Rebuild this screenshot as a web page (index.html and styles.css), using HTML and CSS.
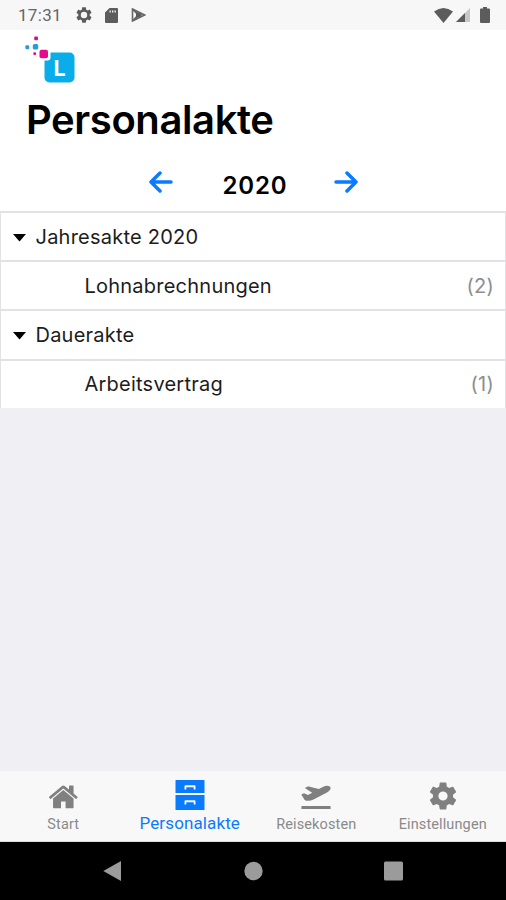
FILE: index.html
```html
<!DOCTYPE html>
<html lang="de">
<head>
<meta charset="utf-8">
<title>Personalakte</title>
<link rel="stylesheet" href="styles.css">
</head>
<body>
<div class="status">
  <span class="clock">17:31</span>
  <svg class="s-gear" viewBox="2 2 20 20"><path fill-rule="evenodd" d="M19.14 12.94c.04-.3.06-.61.06-.94 0-.32-.02-.64-.07-.94l2.03-1.58c.18-.14.23-.41.12-.61l-1.92-3.32c-.12-.22-.37-.29-.59-.22l-2.39.96c-.5-.38-1.03-.7-1.62-.94l-.36-2.54c-.04-.24-.24-.41-.48-.41h-3.84c-.24 0-.43.17-.47.41l-.36 2.54c-.59.24-1.13.57-1.62.94l-2.39-.96c-.22-.08-.47 0-.59.22L2.74 8.87c-.12.21-.08.47.12.61l2.03 1.58c-.05.3-.09.63-.09.94s.02.64.07.94l-2.03 1.58c-.18.14-.23.41-.12.61l1.92 3.32c.12.22.37.29.59.22l2.39-.96c.5.38 1.03.7 1.62.94l.36 2.54c.05.24.24.41.48.41h3.84c.24 0 .44-.17.47-.41l.36-2.54c.59-.24 1.13-.56 1.62-.94l2.39.96c.22.08.47 0 .59-.22l1.92-3.32c.12-.22.07-.47-.12-.61l-2.01-1.58zM12 16a4 4 0 1 1 0-8 4 4 0 0 1 0 8z"/></svg>
  <svg class="s-card" viewBox="0 0 13 15"><path fill-rule="evenodd" d="M4.500 0H12a1 1 0 0 1 1 1v13a1 1 0 0 1-1 1H1a1 1 0 0 1-1-1V4.500zM4.500 2.500v2h1.300v-2zM7 2.500v2h1.300v-2zM9.500 2.500v2h1.300v-2z"/></svg>
  <svg class="s-play" viewBox="0 0 15 14"><path d="M1.500 1l12 6-12 6zM1.500 1l7.500 8M1.500 13L9 5" fill="none" stroke="#666" stroke-width="1.600"/><path d="M5 3.500L11.500 7 5 10.500z"/></svg>
  <span class="fill"></span>
  <svg class="s-wifi" viewBox="0 0 19 15"><path d="M0 3.500Q9.500-3.500 19 3.500L9.500 15z"/></svg>
  <svg class="s-cell" viewBox="0 0 14 14"><path d="M14 0v14H0z" fill="#c8c8c8"/><path d="M9 5v9H0z"/></svg>
  <svg class="s-batt" viewBox="0 0 10 16"><path d="M3 0h4v1.500h2a1 1 0 0 1 1 1V15a1 1 0 0 1-1 1H1a1 1 0 0 1-1-1V2.500a1 1 0 0 1 1-1h2z"/></svg>
</div>
<header class="header">
  <svg class="logo" viewBox="0 0 50 47">
    <rect x="19.500" y="16.500" width="30" height="30" rx="5" fill="#08adea"/>
    <rect x="12.500" y="11.500" width="13" height="13" rx="3" fill="#fff"/>
    <rect x="14.500" y="13.800" width="8.500" height="8.500" rx="2" fill="#e6098c"/>
    <rect x="9.200" y="0.500" width="3.800" height="3.800" rx="1" fill="#e6098c"/>
    <rect x="8.300" y="16.300" width="2.800" height="2.800" rx="1" fill="#e6098c"/>
    <rect x="7.800" y="8" width="5.400" height="5.400" rx="1.500" fill="#259fdc"/>
    <rect x="0.300" y="9.300" width="3.900" height="3.900" rx="1.200" fill="#259fdc"/>
    <text class="logo-letter" x="28.500" y="39.500">L</text>
  </svg>
  <h1 class="title">Personalakte</h1>
  <div class="year">
    <svg class="arrow" viewBox="0 0 24 22"><path d="M22 11H2M11 2L2 11l9 9"/></svg>
    <strong class="year-value">2020</strong>
    <svg class="arrow" viewBox="0 0 24 22"><path d="M2 11h20M13 2l9 9-9 9"/></svg>
  </div>
</header>
<main class="content">
  <div class="row"><svg class="caret" viewBox="0 0 13 8"><path d="M0 0h13L6.500 7.500z"/></svg><span>Jahresakte 2020</span></div>
  <div class="row child"><span>Lohnabrechnungen</span><span class="count">(2)</span></div>
  <div class="row"><svg class="caret" viewBox="0 0 13 8"><path d="M0 0h13L6.500 7.500z"/></svg><span>Dauerakte</span></div>
  <div class="row child"><span>Arbeitsvertrag</span><span class="count">(1)</span></div>
</main>
<nav class="tabs">
  <div class="tab">
    <svg class="icon" viewBox="0 0 30 30"><g transform="translate(.5 1) scale(.0178)"><path d="M1408 992v480q0 26-19 45t-45 19h-384v-384h-256v384h-384q-26 0-45-19t-19-45v-480q0-1 .5-3t.5-3l575-474 575 474q1 2 1 6zm223-69l-62 74q-8 9-21 11h-3q-13 0-21-7l-692-577-692 577q-12 8-24 7-13-2-21-11l-62-74q-8-10-7-23.500t11-21.500l719-599q32-26 76-26t76 26l244 204v-195q0-14 9-23t23-9h192q14 0 23 9t9 23v408l219 182q10 8 11 21.500t-7 23.500z"/></g></svg>
    <span>Start</span>
  </div>
  <div class="tab active">
    <svg class="icon" viewBox="0 0 30 30"><path fill-rule="evenodd" d="M1 0h28a.5.5 0 0 1 .5.5V13H.5V.5A.5.5 0 0 1 1 0zM9.500 9.500h1.800V7.200h7.400v2.300h1.800V6.500c0-.8-.4-1.200-1.200-1.200h-8.600c-.8 0-1.200.4-1.200 1.200zM.5 15h29v14.500a.5.5 0 0 1-.5.5H1a.5.5 0 0 1-.5-.5zM9.500 24.500h1.800v-2.300h7.400v2.300h1.800v-3c0-.8-.4-1.200-1.200-1.200h-8.600c-.8 0-1.200.4-1.200 1.200z"/></svg>
    <span class="active-label">Personalakte</span>
  </div>
  <div class="tab">
    <svg class="icon" viewBox="0 0 30 30"><path d="M1 26h28q.6 0 .6.600v1.800q0 .6-.6.600H1q-.6 0-.6-.6v-1.800q0-.6.600-.6zM.7 15.200q-.4-.7.400-1.100l1.500-.7q.5-.2 1 0l3.400 1.500 4.200-2.100L4.500 8.600q-.6-.6.200-1.100l2.200-1.100q.5-.2 1 0l10 2.600 4.300-2.200c2.300-1.200 5-1.500 6.600-.4 1.300 1 .9 2.900-.3 4.200-.8.9-1.800 1.500-3 2.100L12.500 19.400c-2.500 1.200-4.500 1.700-7.400 1.300-.7-.1-1.200-.4-1.600-.9z"/></svg>
    <span>Reisekosten</span>
  </div>
  <div class="tab">
    <svg class="icon gear" viewBox="2 2 20 20"><path fill-rule="evenodd" d="M19.140 12.940c.04-.3.06-.61.06-.94 0-.32-.02-.64-.07-.94l2.030-1.580c.18-.14.23-.41.12-.61l-1.920-3.320c-.12-.22-.37-.29-.59-.22l-2.390.96c-.5-.38-1.030-.7-1.620-.94l-.36-2.540c-.04-.24-.24-.41-.48-.41h-3.840c-.24 0-.43.17-.47.41l-.36 2.540c-.59.24-1.130.57-1.620.94l-2.390-.96c-.22-.08-.47 0-.59.22L2.740 8.870c-.12.21-.08.47.12.61l2.030 1.580c-.05.3-.09.63-.09.94s.02.64.07.94l-2.030 1.580c-.18.14-.23.41-.12.61l1.920 3.320c.12.22.37.29.59.22l2.390-.96c.5.38 1.030.7 1.620.94l.36 2.540c.05.24.24.41.48.41h3.840c.24 0 .44-.17.47-.41l.36-2.540c.59-.24 1.130-.56 1.620-.94l2.390.96c.22.08.47 0 .59-.22l1.920-3.320c.12-.22.07-.47-.12-.61zM12 15.300a3.300 3.300 0 1 1 0-6.600 3.300 3.300 0 0 1 0 6.600z"/></svg>
    <span>Einstellungen</span>
  </div>
</nav>
<div class="system">
  <svg class="sys" viewBox="0 0 20 20"><path d="M.3 10L18 0v20z"/></svg>
  <svg class="sys" viewBox="0 0 20 20"><circle cx="10.500" cy="10" r="9.200"/></svg>
  <svg class="sys" viewBox="0 0 20 20"><rect x="1" y=".5" width="19" height="19" rx="1.500"/></svg>
</div>
</body>
</html>
```

FILE: styles.css
```css
* { box-sizing: border-box; }
body { margin: 0; height: 900px; display: flex; flex-direction: column; background: #efeff4; font-family: Inter, "Liberation Sans", sans-serif; overflow: hidden; }
svg { display: block; flex: none; }
.status { height: 30px; display: flex; align-items: center; padding: 0 16px 0 18px; background: #f7f7f7; fill: #5c5c5c; }
.clock { width: 58px; font: 17px/30px Roboto, sans-serif; letter-spacing: .3px; color: #666; }
.s-gear { width: 16px; height: 16px; margin-right: 13px; }
.s-card { width: 13px; height: 15px; margin-right: 13px; }
.s-play { width: 15px; height: 14px; }
.fill { flex: 1; }
.s-wifi { width: 19px; height: 15px; margin-right: 3px; }
.s-cell { width: 14px; height: 14px; margin-right: 10px; }
.s-batt { width: 10px; height: 16px; }
.header { height: 181px; background: #fff; padding-top: 6px; }
.logo { width: 50px; height: 47px; margin-left: 25px; }
.logo-letter { font-size: 21.5px; font-weight: 700; fill: #fff; }
.title { margin: 12px 0 0 26px; font-size: 40px; line-height: 50px; font-weight: 600; letter-spacing: -.4px; color: #000; }
.year { display: flex; justify-content: center; margin-top: 25px; gap: 49px; }
.arrow { width: 24px; height: 22px; margin-top: 1px; fill: none; stroke: #0a7aff; stroke-width: 3.5; stroke-linecap: round; stroke-linejoin: round; }
.year-value { width: 64px; margin-right: -2px; margin-left: 1px; padding-top: 1px; font-size: 24px; line-height: 30px; font-weight: 600; letter-spacing: .8px; }
.content { flex: 1; }
.row { height: 49.2px; display: flex; align-items: center; border: solid #e2e2e4; border-width: 2px 1px 0; background: #fff; padding: 0 11px 0 12px; font-size: 20px; letter-spacing: .23px; color: #1c1c1c; }
.caret { width: 13px; height: 8px; margin: 2px 9.5px 0 0; fill: #000; }
.child { padding-left: 83.5px; }
.count { margin-left: auto; color: #8e8e8e; }
.tabs { height: 71px; display: flex; background: #f8f8f8; border-bottom: 1px solid #ddd; font-family: Roboto, sans-serif; font-size: 14.5px; letter-spacing: .12px; color: #8a8a8a; fill: #808080; }
.tab { flex: 1; display: flex; flex-direction: column; align-items: center; padding-top: 9px; line-height: 20px; }
.icon { width: 30px; height: 30px; margin-bottom: 5px; }
.gear { padding: 1px; margin-top: 1px; margin-bottom: 4px; }
.active { color: #0a7aff; fill: #0a7aff; }
.active-label { margin-top: -2px; font-size: 17px; letter-spacing: .12px; }
.system { height: 58px; background: #000; display: flex; justify-content: center; align-items: center; gap: 120px; fill: #9b9b9b; }
.sys { width: 20px; height: 20px; }
```
